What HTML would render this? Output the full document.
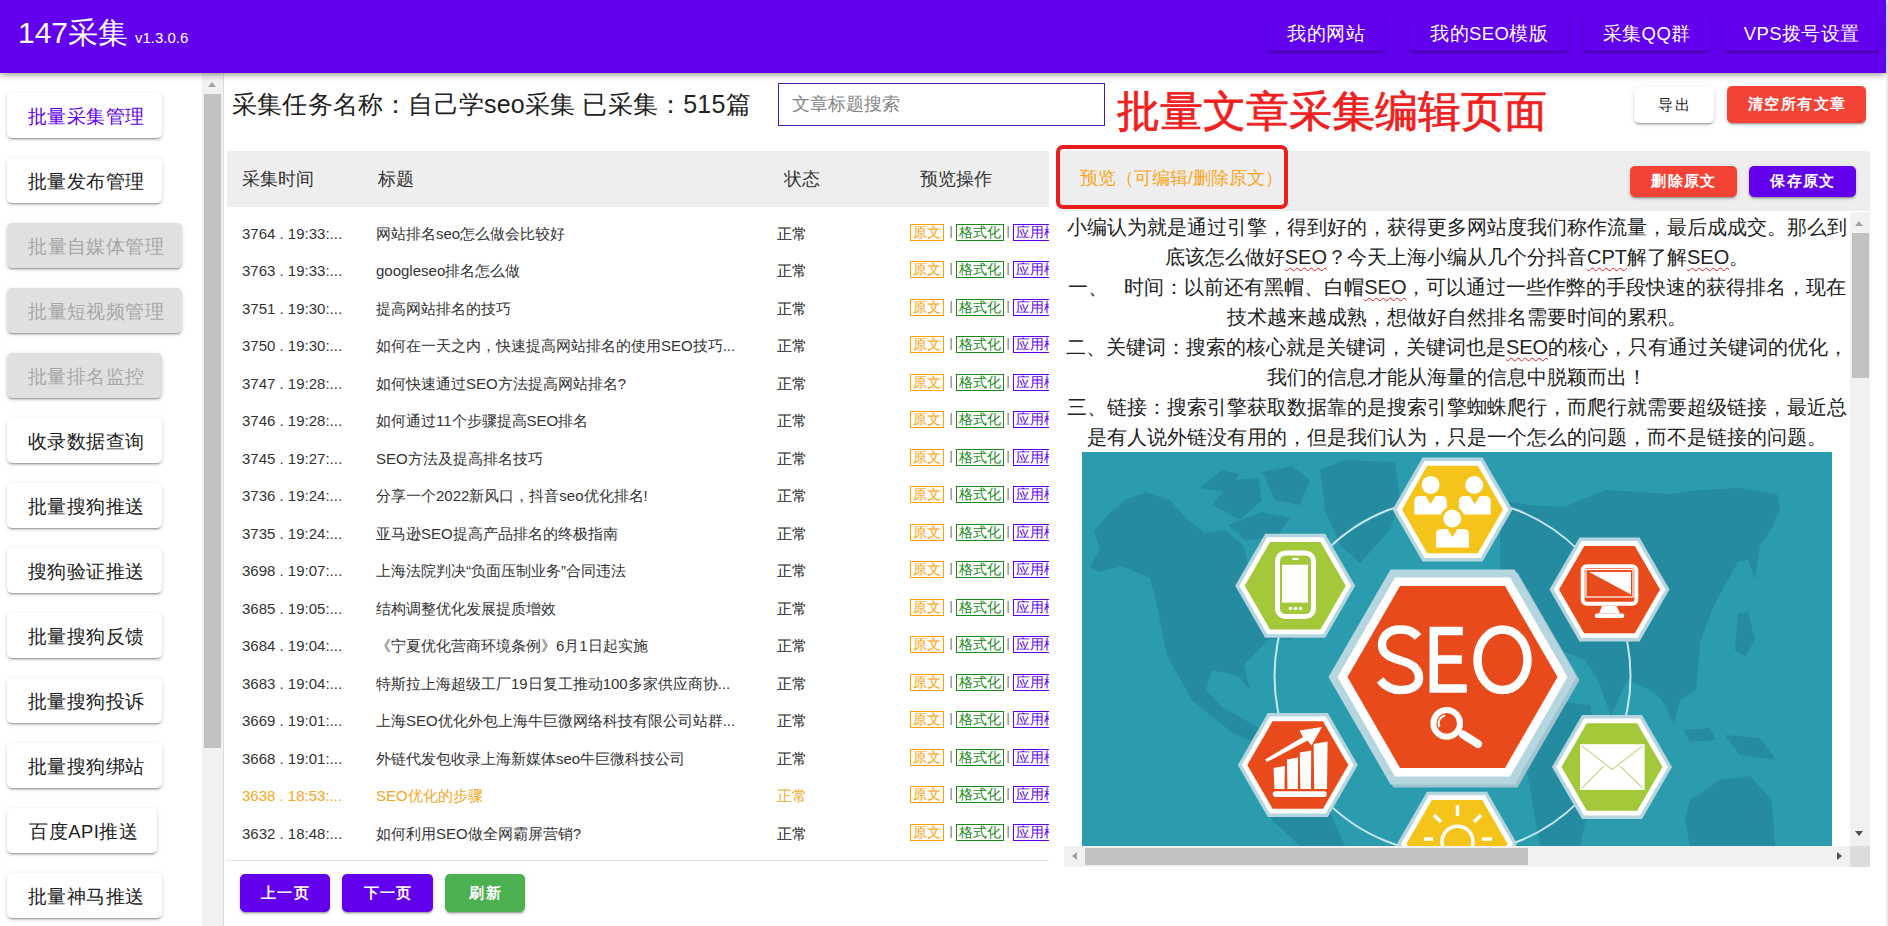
<!DOCTYPE html><html><head><meta charset="utf-8"><title>147采集</title><style>*{margin:0;padding:0;box-sizing:border-box}
html,body{width:1888px;height:926px;overflow:hidden;background:#fff}
body{position:relative;font-family:"Liberation Sans",sans-serif;color:#222}
div,span,i,b{position:absolute;font-style:normal;font-weight:normal;white-space:nowrap}
#hdr{left:0;top:0;width:1886px;height:73px;background:#6200ee;box-shadow:0 2px 4px -1px rgba(0,0,0,.2),0 4px 5px 0 rgba(0,0,0,.12),0 1px 10px 0 rgba(0,0,0,.1);z-index:5}
#rstrip{left:1886px;top:0;width:2px;height:926px;background:#ececec}
#logo{left:18px;top:15px;font-size:30px;line-height:36px;color:#fff}
#ver{left:135px;top:29px;font-size:15px;line-height:18px;color:#fff}
.hb{top:15px;height:36px;line-height:37px;text-align:center;color:#fff;font-size:18.5px;letter-spacing:0.4px;text-indent:0.4px;border-radius:5px;background:#6200ee;box-shadow:0 3px 1px -2px rgba(0,0,0,.2),0 2px 2px 0 rgba(0,0,0,.14),0 1px 5px 0 rgba(0,0,0,.12)}
.sb{left:7px;height:45px;line-height:47.5px;text-align:center;font-size:18.5px;letter-spacing:0.4px;text-indent:3.4px;color:#222;background:#fff;border-radius:5px;box-shadow:0 3px 1px -2px rgba(0,0,0,.2),0 2px 2px 0 rgba(0,0,0,.14),0 1px 5px 0 rgba(0,0,0,.12)}
.sb.act{color:#6200ee}
.sb.dis{background:#e0e0e0;color:#a8a8a8}
#sbtrack{left:202px;top:73px;width:22px;height:853px;background:#f1f1f1;border-right:1px solid #dcdcdc}
#sbthumb{left:2px;top:21px;width:17px;height:654px;background:#c1c1c1}
.uparr{left:6px;top:9px;width:0;height:0;border-left:4.5px solid transparent;border-right:4.5px solid transparent;border-bottom:5px solid #a3a3a3}
.dnarr{width:0;height:0;border-left:4.5px solid transparent;border-right:4.5px solid transparent;border-top:5px solid #505050}
.lfarr{left:8px;top:6px;width:0;height:0;border-top:4.5px solid transparent;border-bottom:4.5px solid transparent;border-right:5px solid #a3a3a3}
.rtarr{left:773px;top:6px;width:0;height:0;border-top:4.5px solid transparent;border-bottom:4.5px solid transparent;border-left:5px solid #505050}
#title{left:232px;top:86px;font-size:25px;line-height:36px;color:#222}
#search{left:778px;top:83px;width:327px;height:43px;border:1.4px solid #4d1aa8;font-size:17.5px;line-height:41px;padding-left:13px;color:#858585}
#bigred{left:1117px;top:83px;font-size:43px;line-height:56px;color:#f0201e;-webkit-text-stroke:0.7px #f0201e}
.btn{display:flex;align-items:center;justify-content:center;color:#fff;font-size:15px;letter-spacing:1.34px;text-indent:1.34px;border-radius:5px;box-shadow:0 3px 1px -2px rgba(0,0,0,.2),0 2px 2px 0 rgba(0,0,0,.14),0 1px 5px 0 rgba(0,0,0,.12)}
.btn.white{background:#fff;color:#222}
.btn.red{background:#f44336}
.btn.purple{background:#6200ee}
.btn.green{background:#4caf50}
#thead{left:227px;top:151px;width:822px;height:56px;background:#eeeeee}
#thead span{top:0;line-height:56px;font-size:17.5px;color:#333}
#tbody{left:227px;top:215px;width:822px;height:640px;overflow:hidden}
.row{left:0;width:822px;height:37px}
.row span{top:0;line-height:37px}
.c1{left:15px;font-size:15px;color:#333}
.c2{left:149px;font-size:15px;color:#333}
.c3{left:550px;font-size:15px;color:#222}
.c4{left:683px;top:0;height:37px;width:139px;overflow:hidden}
.c4 i,.c4 b{top:9px;height:17px;line-height:15px;font-size:13.75px}
.c4 i{border:1.25px solid;padding:0 2px}
.c4 b{color:#666;width:6px;text-align:center;font-size:12px}
.t1{left:0;color:#ffa000;border-color:#ffa000}
.t2{left:46px;color:#1b8a1b;border-color:#1b8a1b}
.t3{left:103px;color:#6200ee;border-color:#6200ee}
.c4 b:nth-of-type(1){left:38px}
.c4 b:nth-of-type(2){left:95px}
.row.orange span{color:#f5a623}
#divider{left:226px;top:860px;width:823px;height:1px;background:#e3e3e3}
#phead{left:1058px;top:151px;width:812px;height:60px;background:#eeeeee}
#ptext{left:22px;top:0;line-height:55px;font-size:17.5px;color:#f5a623}
#redbox{left:1056px;top:145px;width:232px;height:64px;border:4px solid #ee1d1d;border-radius:7px}
#art{left:1064px;top:212px;width:786px;height:634px;overflow:hidden;background:#fff}
.ln{left:0;width:786px;text-align:center;font-size:20px;line-height:30px;color:#222}
.sp{text-decoration:underline wavy #e02020;text-decoration-thickness:1px;text-underline-offset:3px}
#img{left:18px;top:240px;width:750px;height:420px;overflow:hidden;background:#2b9cae}
#vtrack{left:1850px;top:212px;width:20px;height:634px;background:#f1f1f1}
#vthumb{left:2px;top:21px;width:17px;height:145px;background:#c1c1c1}
#htrack{left:1064px;top:846px;width:786px;height:21px;background:#f1f1f1}
#hthumb{left:21px;top:2px;width:443px;height:17px;background:#c1c1c1}
#corner{left:1850px;top:846px;width:20px;height:21px;background:#dcdcdc}
#art span.sp{position:static}
.btn.red,.btn.purple,.btn.green{font-weight:bold}
.c4 i{border-width:1px}
#title{letter-spacing:0.2px}
</style></head><body><div id="hdr"><div id="logo">147采集</div><div id="ver">v1.3.0.6</div><div class="hb" style="left:1267px;width:118px">我的网站</div><div class="hb" style="left:1409px;width:160px">我的SEO模版</div><div class="hb" style="left:1583px;width:127px">采集QQ群</div><div class="hb" style="left:1723px;width:157px">VPS拨号设置</div></div><div id="rstrip"></div><div class="sb act" style="top:93px;width:155px">批量采集管理</div><div class="sb " style="top:158px;width:155px">批量发布管理</div><div class="sb dis" style="top:223px;width:175px">批量自媒体管理</div><div class="sb dis" style="top:288px;width:175px">批量短视频管理</div><div class="sb dis" style="top:353px;width:155px">批量排名监控</div><div class="sb " style="top:418px;width:155px">收录数据查询</div><div class="sb " style="top:483px;width:155px">批量搜狗推送</div><div class="sb " style="top:548px;width:155px">搜狗验证推送</div><div class="sb " style="top:613px;width:155px">批量搜狗反馈</div><div class="sb " style="top:678px;width:155px">批量搜狗投诉</div><div class="sb " style="top:743px;width:155px">批量搜狗绑站</div><div class="sb " style="top:808px;width:150px">百度API推送</div><div class="sb " style="top:873px;width:155px">批量神马推送</div><div id="sbtrack"><div class="uparr"></div><div id="sbthumb"></div></div><div id="title">采集任务名称：自己学seo采集 已采集：515篇</div><div id="search">文章标题搜索</div><div id="bigred">批量文章采集编辑页面</div><div class="btn white" style="left:1634px;top:87px;width:80px;height:36px">导出</div><div class="btn red" style="left:1727px;top:86px;width:139px;height:37px">清空所有文章</div><div id="thead"><span style="left:15px">采集时间</span><span style="left:151px">标题</span><span style="left:557px">状态</span><span style="left:693px">预览操作</span></div><div id="tbody"><div class="row" style="top:-0.5px"><span class="c1">3764 . 19:33:...</span><span class="c2">网站排名seo怎么做会比较好</span><span class="c3">正常</span><span class="c4"><i class="t1">原文</i><b>|</b><i class="t2">格式化</i><b>|</b><i class="t3">应用模板</i></span></div><div class="row" style="top:37.0px"><span class="c1">3763 . 19:33:...</span><span class="c2">googleseo排名怎么做</span><span class="c3">正常</span><span class="c4"><i class="t1">原文</i><b>|</b><i class="t2">格式化</i><b>|</b><i class="t3">应用模板</i></span></div><div class="row" style="top:74.5px"><span class="c1">3751 . 19:30:...</span><span class="c2">提高网站排名的技巧</span><span class="c3">正常</span><span class="c4"><i class="t1">原文</i><b>|</b><i class="t2">格式化</i><b>|</b><i class="t3">应用模板</i></span></div><div class="row" style="top:112.0px"><span class="c1">3750 . 19:30:...</span><span class="c2">如何在一天之内，快速提高网站排名的使用SEO技巧...</span><span class="c3">正常</span><span class="c4"><i class="t1">原文</i><b>|</b><i class="t2">格式化</i><b>|</b><i class="t3">应用模板</i></span></div><div class="row" style="top:149.5px"><span class="c1">3747 . 19:28:...</span><span class="c2">如何快速通过SEO方法提高网站排名?</span><span class="c3">正常</span><span class="c4"><i class="t1">原文</i><b>|</b><i class="t2">格式化</i><b>|</b><i class="t3">应用模板</i></span></div><div class="row" style="top:187.0px"><span class="c1">3746 . 19:28:...</span><span class="c2">如何通过11个步骤提高SEO排名</span><span class="c3">正常</span><span class="c4"><i class="t1">原文</i><b>|</b><i class="t2">格式化</i><b>|</b><i class="t3">应用模板</i></span></div><div class="row" style="top:224.5px"><span class="c1">3745 . 19:27:...</span><span class="c2">SEO方法及提高排名技巧</span><span class="c3">正常</span><span class="c4"><i class="t1">原文</i><b>|</b><i class="t2">格式化</i><b>|</b><i class="t3">应用模板</i></span></div><div class="row" style="top:262.0px"><span class="c1">3736 . 19:24:...</span><span class="c2">分享一个2022新风口，抖音seo优化排名!</span><span class="c3">正常</span><span class="c4"><i class="t1">原文</i><b>|</b><i class="t2">格式化</i><b>|</b><i class="t3">应用模板</i></span></div><div class="row" style="top:299.5px"><span class="c1">3735 . 19:24:...</span><span class="c2">亚马逊SEO提高产品排名的终极指南</span><span class="c3">正常</span><span class="c4"><i class="t1">原文</i><b>|</b><i class="t2">格式化</i><b>|</b><i class="t3">应用模板</i></span></div><div class="row" style="top:337.0px"><span class="c1">3698 . 19:07:...</span><span class="c2">上海法院判决“负面压制业务”合同违法</span><span class="c3">正常</span><span class="c4"><i class="t1">原文</i><b>|</b><i class="t2">格式化</i><b>|</b><i class="t3">应用模板</i></span></div><div class="row" style="top:374.5px"><span class="c1">3685 . 19:05:...</span><span class="c2">结构调整优化发展提质增效</span><span class="c3">正常</span><span class="c4"><i class="t1">原文</i><b>|</b><i class="t2">格式化</i><b>|</b><i class="t3">应用模板</i></span></div><div class="row" style="top:412.0px"><span class="c1">3684 . 19:04:...</span><span class="c2">《宁夏优化营商环境条例》6月1日起实施</span><span class="c3">正常</span><span class="c4"><i class="t1">原文</i><b>|</b><i class="t2">格式化</i><b>|</b><i class="t3">应用模板</i></span></div><div class="row" style="top:449.5px"><span class="c1">3683 . 19:04:...</span><span class="c2">特斯拉上海超级工厂19日复工推动100多家供应商协...</span><span class="c3">正常</span><span class="c4"><i class="t1">原文</i><b>|</b><i class="t2">格式化</i><b>|</b><i class="t3">应用模板</i></span></div><div class="row" style="top:487.0px"><span class="c1">3669 . 19:01:...</span><span class="c2">上海SEO优化外包上海牛巨微网络科技有限公司站群...</span><span class="c3">正常</span><span class="c4"><i class="t1">原文</i><b>|</b><i class="t2">格式化</i><b>|</b><i class="t3">应用模板</i></span></div><div class="row" style="top:524.5px"><span class="c1">3668 . 19:01:...</span><span class="c2">外链代发包收录上海新媒体seo牛巨微科技公司</span><span class="c3">正常</span><span class="c4"><i class="t1">原文</i><b>|</b><i class="t2">格式化</i><b>|</b><i class="t3">应用模板</i></span></div><div class="row orange" style="top:562.0px"><span class="c1">3638 . 18:53:...</span><span class="c2">SEO优化的步骤</span><span class="c3">正常</span><span class="c4"><i class="t1">原文</i><b>|</b><i class="t2">格式化</i><b>|</b><i class="t3">应用模板</i></span></div><div class="row" style="top:599.5px"><span class="c1">3632 . 18:48:...</span><span class="c2">如何利用SEO做全网霸屏营销?</span><span class="c3">正常</span><span class="c4"><i class="t1">原文</i><b>|</b><i class="t2">格式化</i><b>|</b><i class="t3">应用模板</i></span></div></div><div id="divider"></div><div class="btn purple" style="left:240px;top:874px;width:90px;height:38px">上一页</div><div class="btn purple" style="left:342px;top:874px;width:91px;height:38px">下一页</div><div class="btn green" style="left:445px;top:874px;width:80px;height:38px">刷新</div><div id="phead"><div id="ptext">预览（可编辑/删除原文）</div></div><div id="redbox"></div><div class="btn red" style="left:1630px;top:166px;width:107px;height:31px">删除原文</div><div class="btn purple" style="left:1749px;top:166px;width:107px;height:31px">保存原文</div><div id="art"><div class="ln" style="top:0">小编认为就是通过引擎，得到好的，获得更多网站度我们称作流量，最后成成交。那么到</div>
<div class="ln" style="top:30px">底该怎么做好<span class="sp">SEO</span>？今天上海小编从几个分抖音<span class="sp">CPT</span>解了解<span class="sp">SEO</span>。</div>
<div class="ln" style="top:60px">一、&nbsp;&nbsp; 时间：以前还有黑帽、白帽<span class="sp">SEO</span>，可以通过一些作弊的手段快速的获得排名，现在</div>
<div class="ln" style="top:90px">技术越来越成熟，想做好自然排名需要时间的累积。</div>
<div class="ln" style="top:120px">二、关键词：搜索的核心就是关键词，关键词也是<span class="sp">SEO</span>的核心，只有通过关键词的优化，</div>
<div class="ln" style="top:150px">我们的信息才能从海量的信息中脱颖而出！</div>
<div class="ln" style="top:180px">三、链接：搜索引擎获取数据靠的是搜索引擎蜘蛛爬行，而爬行就需要超级链接，最近总</div>
<div class="ln" style="top:210px">是有人说外链没有用的，但是我们认为，只是一个怎么的问题，而不是链接的问题。</div>
<div id="img"><svg width="750" height="420" viewBox="0 0 750 420"><rect width="750" height="420" fill="#2b9cae"/><polygon fill="#258ba1" points="8.0,115.0 18.0,96.0 12.0,80.0 25.0,64.0 43.0,48.0 64.0,40.0 88.0,48.0 106.0,68.0 123.0,81.0 143.0,78.0 162.0,94.0 168.0,123.0 183.0,128.0 198.0,108.0 218.0,103.0 248.0,118.0 263.0,148.0 228.0,173.0 208.0,188.0 187.0,187.0 162.0,213.0 168.0,238.0 156.0,224.0 130.0,218.0 124.0,238.0 140.0,255.0 170.0,272.0 187.0,281.0 194.0,293.0 178.0,294.0 148.0,279.0 110.0,248.0 85.0,204.0 74.0,149.0 68.0,126.0 40.0,114.0 18.0,120.0"/><polygon fill="#258ba1" points="130.0,53.0 150.0,28.0 176.0,26.0 180.0,48.0 158.0,68.0"/><polygon fill="#258ba1" points="180.0,20.0 210.0,14.0 228.0,28.0 218.0,53.0 193.0,48.0"/><polygon fill="#258ba1" points="146.0,73.0 180.0,60.0 208.0,66.0 194.0,86.0 163.0,88.0"/><polygon fill="#258ba1" points="118.0,36.0 140.0,18.0 158.0,22.0 143.0,40.0"/><polygon fill="#258ba1" points="238.0,18.0 263.0,8.0 313.0,10.0 318.0,48.0 308.0,78.0 278.0,111.0 258.0,93.0 243.0,58.0"/><polygon fill="#258ba1" points="183.0,338.0 218.0,348.0 248.0,360.0 263.0,394.0 218.0,394.0 190.0,368.0"/><polygon fill="#258ba1" points="418.0,48.0 448.0,53.0 482.0,55.0 524.0,38.0 558.0,40.0 588.0,42.0 618.0,38.0 656.0,36.0 695.0,42.0 698.0,58.0 690.0,76.0 678.0,93.0 673.0,128.0 666.0,108.0 656.0,110.0 639.0,140.0 630.0,158.0 618.0,191.0 614.0,238.0 598.0,248.0 592.0,272.0 580.0,248.0 568.0,238.0 545.0,228.0 529.0,264.0 516.0,228.0 503.0,208.0 478.0,198.0 460.0,170.0 438.0,148.0 418.0,138.0"/><polygon fill="#258ba1" points="656.0,162.0 666.0,160.0 673.0,188.0 663.0,204.0 653.0,198.0"/><polygon fill="#258ba1" points="601.0,278.0 628.0,276.0 634.0,288.0 608.0,290.0"/><polygon fill="#258ba1" points="643.0,283.0 678.0,286.0 694.0,308.0 658.0,303.0"/><polygon fill="#258ba1" points="608.0,348.0 638.0,328.0 668.0,324.0 690.0,348.0 693.0,394.0 608.0,394.0 603.0,368.0"/><polygon fill="#258ba1" points="460.0,248.0 508.0,253.0 518.0,308.0 498.0,394.0 458.0,394.0 443.0,308.0"/><circle cx="370.5" cy="224.0" r="178" fill="none" stroke="#c8e6ee" stroke-width="2"/><polygon fill="#9fc3cf" points="497.5,228.0 435.5,335.4 311.5,335.4 249.5,228.0 311.5,120.6 435.5,120.6"/><polygon fill="#b6d6df" points="494.5,225.0 432.5,332.4 308.5,332.4 246.5,225.0 308.5,117.6 432.5,117.6"/><polygon fill="#fff" points="485.5,225.0 428.0,324.6 313.0,324.6 255.5,225.0 313.0,125.4 428.0,125.4"/><polygon fill="#e84a1b" points="475.5,225.0 423.0,315.9 318.0,315.9 265.5,225.0 318.0,134.1 423.0,134.1"/><polygon fill="#b6d6df" points="430.5,57.5 400.5,109.5 340.5,109.5 310.5,57.5 340.5,5.5 400.5,5.5"/><polygon fill="#fff" points="426.5,57.5 398.5,106.0 342.5,106.0 314.5,57.5 342.5,9.0 398.5,9.0"/><polygon fill="#f5c41a" points="421.0,57.5 395.8,101.2 345.2,101.2 320.0,57.5 345.2,13.8 395.8,13.8"/><polygon fill="#b6d6df" points="273.2,133.8 243.2,185.8 183.2,185.8 153.2,133.8 183.2,81.8 243.2,81.8"/><polygon fill="#fff" points="269.2,133.8 241.2,182.3 185.2,182.3 157.2,133.8 185.2,85.3 241.2,85.3"/><polygon fill="#a3c93a" points="263.7,133.8 238.5,177.5 188.0,177.5 162.7,133.8 188.0,90.1 238.5,90.1"/><polygon fill="#b6d6df" points="587.5,137.6 557.5,189.6 497.5,189.6 467.5,137.6 497.5,85.6 557.5,85.6"/><polygon fill="#fff" points="583.5,137.6 555.5,186.1 499.5,186.1 471.5,137.6 499.5,89.1 555.5,89.1"/><polygon fill="#e84a1b" points="578.0,137.6 552.8,181.3 502.2,181.3 477.0,137.6 502.2,93.9 552.8,93.9"/><polygon fill="#b6d6df" points="275.8,313.0 245.8,365.0 185.8,365.0 155.8,313.0 185.8,261.0 245.8,261.0"/><polygon fill="#fff" points="271.8,313.0 243.8,361.5 187.8,361.5 159.8,313.0 187.8,264.5 243.8,264.5"/><polygon fill="#e84a1b" points="266.3,313.0 241.0,356.7 190.5,356.7 165.3,313.0 190.5,269.3 241.0,269.3"/><polygon fill="#b6d6df" points="590.0,315.0 560.0,367.0 500.0,367.0 470.0,315.0 500.0,263.0 560.0,263.0"/><polygon fill="#fff" points="586.0,315.0 558.0,363.5 502.0,363.5 474.0,315.0 502.0,266.5 558.0,266.5"/><polygon fill="#a3c93a" points="580.5,315.0 555.2,358.7 504.8,358.7 479.5,315.0 504.8,271.3 555.2,271.3"/><polygon fill="#b6d6df" points="435.0,391.7 405.0,443.7 345.0,443.7 315.0,391.7 345.0,339.7 405.0,339.7"/><polygon fill="#fff" points="431.0,391.7 403.0,440.2 347.0,440.2 319.0,391.7 347.0,343.2 403.0,343.2"/><polygon fill="#f5c41a" points="425.5,391.7 400.2,435.4 349.8,435.4 324.5,391.7 349.8,348.0 400.2,348.0"/><g fill="none" stroke="#fff" stroke-width="8.5"><path d="M 336.0 185.0 C 330.0 178.0 324.0 177.5 318.0 177.5 C 306.0 177.5 300.0 185.0 300.0 193.0 C 300.0 203.0 310.0 206.0 320.0 209.0 C 331.0 212.0 337.0 218.0 337.0 226.0 C 337.0 234.0 329.0 238.0 318.0 238.0 C 309.0 238.0 303.0 234.0 298.0 228.0 " stroke-linecap="butt"/><path d="M 380.79999999999995 179 H 351.79999999999995 V 236.5 H 384.79999999999995 M 351.79999999999995 207.5 H 379.79999999999995"/><ellipse cx="420.5" cy="207.79999999999995" rx="25" ry="30.3"/><circle cx="364.70000000000005" cy="271.4" r="13.3" stroke-width="6"/><path d="M 363 263.5 A 8 8 0 0 0 357.5 275" stroke-width="2"/><path d="M 381 282.5 L 396 292" stroke-width="8" stroke-linecap="round"/></g><circle cx="348.6" cy="32.9" r="9" fill="#fff"/><path fill="#fff" d="M 332.3 62.4 V 49.0 Q 332.3 44.0 338.3 44.0 H 343.5 L 348.5 52.0 L 353.5 44.0 H 358.8 Q 364.8 44.0 364.8 49.0 V 62.4 Z"/><circle cx="392.2" cy="33.0" r="9" fill="#fff"/><path fill="#fff" d="M 376.9 62.4 V 49.0 Q 376.9 44.0 382.9 44.0 H 387.8 L 392.8 52.0 L 397.8 44.0 H 402.7 Q 408.7 44.0 408.7 49.0 V 62.4 Z"/><circle cx="370.29999999999995" cy="66.5" r="12" fill="#f5c41a"/><circle cx="370.3" cy="66.5" r="9" fill="#fff"/><path fill="#fff" d="M 354.0 95.5 V 82.0 Q 354.0 77.0 360.0 77.0 H 365.5 L 370.5 85.0 L 375.5 77.0 H 381.0 Q 387.0 77.0 387.0 82.0 V 95.5 Z"/><rect x="195.5" y="101" width="36" height="63.5" rx="8" fill="none" stroke="#fff" stroke-width="5"/><rect x="200" y="112.79999999999995" width="26" height="37.8" fill="#fff"/><rect x="210.5" y="106" width="6" height="2" fill="#fff"/><circle cx="208.5" cy="156.5" r="1.8" fill="#fff"/><circle cx="213.5" cy="156.5" r="1.8" fill="#fff"/><circle cx="218.5" cy="156.5" r="1.8" fill="#fff"/><rect x="500.70000000000005" y="114.29999999999995" width="53.6" height="37.5" rx="4" fill="none" stroke="#fff" stroke-width="4"/><rect x="504" y="117.5" width="47" height="27.5" fill="none" stroke="#fff" stroke-width="1.2"/><polygon fill="#fff" points="507.0,120.0 549.0,120.0 549.0,142.5"/><polygon fill="#fff" points="520.0,154.0 534.5,154.0 538.0,161.5 517.0,161.5"/><rect x="512.8" y="161.5" width="29.5" height="4.5" rx="2" fill="#fff"/><polygon fill="#fff" points="191.5,316.0 202.8,314.0 202.5,337.0 192.5,337.0"/><polygon fill="#fff" points="204.9,307.5 216.1,305.5 215.8,337.0 205.5,337.0"/><polygon fill="#fff" points="217.8,300.5 229.2,298.5 229.0,337.0 218.4,337.0"/><polygon fill="#fff" points="231.6,292.0 245.6,289.4 245.0,337.0 232.2,337.0"/><rect x="190.79999999999995" y="339.29999999999995" width="54" height="5.6" rx="2.8" fill="#fff"/><polygon fill="#fff" points="183.0,307.5 221.0,285.0 217.5,278.5 240.0,275.0 229.5,293.5 225.5,288.5 185.0,310.0"/><rect x="498" y="292.20000000000005" width="64.6" height="45.7" fill="#fff"/><path d="M 500 294 L 530.3 317.5 L 560.5999999999999 294 M 500 336 L 522 314 M 560.5999999999999 336 L 538 314" fill="none" stroke="#c5dd8c" stroke-width="1.2"/><circle cx="375.5" cy="389.79999999999995" r="15.5" fill="none" stroke="#fff" stroke-width="3.5"/><g stroke="#fff" stroke-width="3.5" stroke-linecap="butt"><line x1="375.5" y1="353" x2="375.5" y2="364"/><line x1="352" y1="363" x2="359" y2="370"/><line x1="399" y1="363" x2="392" y2="370"/><line x1="342" y1="387" x2="351" y2="387"/><line x1="400" y1="387" x2="410" y2="387"/></g></svg></div></div><div id="vtrack"><div class="uparr" style="left:5px;top:9px"></div><div id="vthumb"></div><div class="dnarr" style="left:5px;top:619px"></div></div><div id="htrack"><div class="lfarr"></div><div id="hthumb"></div><div class="rtarr"></div></div><div id="corner"></div></body></html>
